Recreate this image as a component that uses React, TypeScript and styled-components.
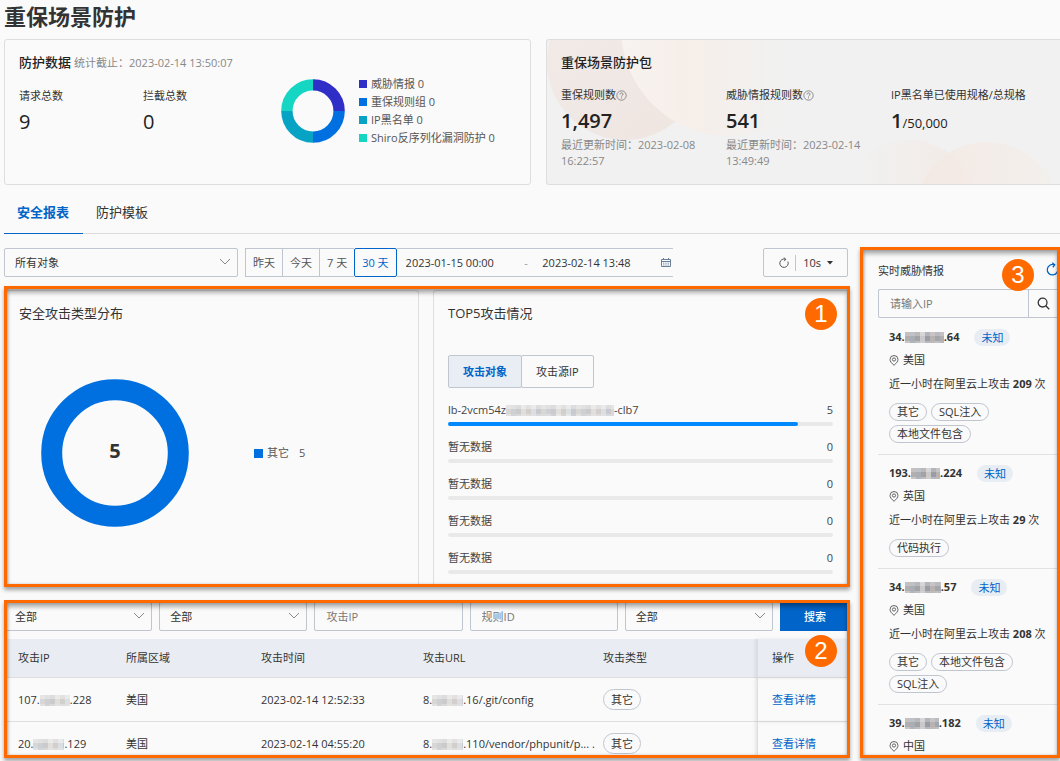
import React from "react";
import styled, { createGlobalStyle, css } from "styled-components";

const GlobalStyle = createGlobalStyle`
  *, *::before, *::after { box-sizing: border-box; }
  body {
    margin: 0;
    background: #fafafa;
    color: #333;
    font-family: "Open Sans", "Noto Sans CJK SC", sans-serif;
    font-size: 11px;
    line-height: 18px;
  }
  button, input, select { font: inherit; color: inherit; margin: 0; border-radius: 0; }
  h1, h2, p, ul, dl, dd { margin: 0; padding: 0; }
  ul { list-style: none; }
`;

const ACCENT = "#ff6a00";
const BLUE = "#0064c8";
const LINE = "#c0c6d0";

const Page = styled.div`
  display: flex;
  flex-direction: column;
  height: 100vh;
  min-height: 700px;
  padding: 0 0 3px 4px;
  overflow: hidden;
`;

const PageTitle = styled.h1`
  padding-bottom: 7px;
  font-size: 22px;
  line-height: 32px;
  font-weight: 700;
`;

/* ---------- summary cards ---------- */

const Summary = styled.section`
  display: grid;
  grid-template-columns: 527fr 514fr;
  gap: 15px;
  flex: none;
`;

const Card = styled.div<{ $tinted?: boolean }>`
  position: relative;
  display: flex;
  min-height: 146px;
  padding: 12px 14px;
  border: 1px solid #dedede;
  border-radius: 3px;
  ${(p) =>
    p.$tinted &&
    css`
      flex-direction: column;
      background: #f1f1f1;
      border-right: 0;
      border-radius: 3px 0 0 3px;
      overflow: hidden;
    `}
`;

const CardTitle = styled.h2`
  position: relative;
  margin-bottom: 14px;
  font-size: 13px;
  line-height: 20px;
  font-weight: 500;
  color: #222;
  small { font-size: 11px; color: #888; font-weight: 400; margin-left: 3px; }
`;

const Decoration = styled.svg`
  position: absolute;
  inset: 0;
  width: 100%;
  height: 100%;
`;

const Stats = styled.dl<{ $col: number; $count: number }>`
  position: relative;
  display: grid;
  grid-template-columns: repeat(${(p) => p.$count}, ${(p) => p.$col}px);
  dt { display: flex; align-items: center; }
`;

const StatValue = styled.dd<{ $strong?: boolean }>`
  font-size: 20px;
  line-height: 33px;
  font-weight: ${(p) => (p.$strong ? 600 : 500)};
  color: #222;
  span { font-size: 13px; font-weight: 400; }
`;

const StatNote = styled.dd`
  width: 140px;
  line-height: 16px;
  color: #888;
`;

const DataBlock = styled.div`
  width: 262px;
`;

const Legend = styled.ul`
  margin-left: 14px;
  align-self: center;
  color: #555;
  li { display: flex; align-items: center; gap: 4px; }
`;

const Swatch = styled.i<{ $color: string; $size: number }>`
  width: ${(p) => p.$size}px;
  height: ${(p) => p.$size}px;
  background: ${(p) => p.$color};
`;

const ChartRow = styled.div`
  display: flex;
  align-items: center;
  height: 117px;
`;

/* ---------- tabs and toolbar ---------- */

const Tabs = styled.nav`
  display: flex;
  flex: none;
  height: 49px;
  border-bottom: 1px solid #dcdcdc;
`;

const Tab = styled.button<{ $active?: boolean }>`
  height: 49px;
  padding: 6px 14px 0 13px;
  border: 0;
  border-bottom: 1px solid ${(p) => (p.$active ? BLUE : "transparent")};
  background: none;
  font-size: 13px;
  font-weight: ${(p) => (p.$active ? 700 : 400)};
  color: ${(p) => (p.$active ? BLUE : "#333")};
`;

const Body = styled.div`
  display: grid;
  grid-template-columns: minmax(0, 1fr) 200px;
  gap: 10px;
  flex: 1;
  min-height: 0;
  padding-top: 13px;
`;

const Main = styled.main`
  display: flex;
  flex-direction: column;
  min-width: 0;
  min-height: 0;
`;

const Toolbar = styled.div`
  display: flex;
  gap: 7px;
  flex: none;
  padding: 1px 2px 9px 0;
`;

const SelectWrap = styled.div<{ $width?: number }>`
  position: relative;
  flex: ${(p) => (p.$width ? `0 0 ${p.$width}px` : "1")};
  min-width: 0;
  select {
    width: 100%;
    height: 29px;
    padding: 0 24px 0 10px;
    border: 1px solid ${LINE};
    border-radius: 2px;
    background: transparent;
    appearance: none;
  }
  svg { position: absolute; right: 7px; top: 10px; pointer-events: none; }
`;

const Range = styled.div`
  display: flex;
  flex: 0 0 428px;
  height: 29px;
`;

const RangeButton = styled.button<{ $active?: boolean }>`
  flex: none;
  padding: 0 7px;
  border: 1px solid ${(p) => (p.$active ? BLUE : LINE)};
  border-right-width: ${(p) => (p.$active ? 1 : 0)}px;
  border-radius: ${(p) => (p.$active ? 2 : 0)}px;
  background: transparent;
  color: ${(p) => (p.$active ? BLUE : "#555")};
`;

const Dates = styled.div`
  display: flex;
  align-items: center;
  flex: 1;
  min-width: 0;
  padding: 0 2px 0 9px;
  border: solid ${LINE};
  border-width: 1px 0;
  color: #999;
  input {
    flex: 1;
    width: 100px;
    min-width: 0;
    height: 20px;
    padding: 0;
    border: 0;
    background: none;
    color: #333;
  }
  span { width: 18px; }
`;

const Refresh = styled.div`
  display: flex;
  align-items: center;
  height: 29px;
  margin-left: auto;
  padding: 0 14px;
  border: 1px solid ${LINE};
  border-radius: 2px;
`;

const PlainButton = styled.button`
  display: flex;
  align-items: center;
  gap: 6px;
  padding: 0;
  border: 0;
  background: none;
`;

const Divider = styled.i`
  width: 1px;
  height: 16px;
  margin: 0 7px 0 5px;
  background: ${LINE};
`;

/* ---------- numbered call-out frames ---------- */

const Frame = styled.section<{ $grow?: boolean }>`
  position: relative;
  display: flex;
  flex-direction: column;
  flex: ${(p) => (p.$grow ? "1" : "none")};
  min-height: 0;
  & + & { margin-top: 13px; }
  &::after {
    content: "";
    position: absolute;
    inset: 0;
    border: 3px solid ${ACCENT};
    box-shadow: 0 3px 4px rgba(0, 0, 0, 0.35), inset 0 4px 4px rgba(0, 0, 0, 0.3),
      inset 1px 0 3px rgba(0, 0, 0, 0.2);
    pointer-events: none;
  }
`;

const Clip = styled.div`
  flex: 1;
  min-height: 0;
  overflow: hidden;
`;

const Marker = styled.b<{ $top: number; $right: number }>`
  position: absolute;
  z-index: 1;
  top: ${(p) => p.$top}px;
  right: ${(p) => p.$right}px;
  width: 32px;
  height: 32px;
  border-radius: 50%;
  background: ${ACCENT};
  color: #fff;
  font: 400 24px/32px "Liberation Sans", sans-serif;
  text-align: center;
`;

/* ---------- charts ---------- */

const Charts = styled.div`
  display: grid;
  grid-template-columns: 415fr 417fr;
  gap: 14px;
  padding-top: 4px;
`;

const Panel = styled.div`
  min-height: 297px;
  padding: 12px 16px 0 14px;
  border: 1px solid #dedede;
  border-bottom: 0;
  border-radius: 3px 3px 0 0;
`;

const PanelTitle = styled.h2`
  font-size: 13px;
  line-height: 20px;
  font-weight: 400;
`;

const PieRow = styled.div`
  display: flex;
  align-items: center;
  margin-top: 56px;
  padding-left: 22px;
`;

const PieLegend = styled.div`
  display: flex;
  align-items: center;
  gap: 4px;
  margin-left: 65px;
  color: #555;
  span { margin-left: 6px; }
`;

const Segments = styled.div`
  display: flex;
  margin: 32px 0 13px;
`;

const Segment = styled.button<{ $active?: boolean }>`
  height: 33px;
  padding: 0 14px;
  border: 1px solid ${LINE};
  border-radius: 2px;
  background: ${(p) => (p.$active ? "#e9edf4" : "transparent")};
  color: ${(p) => (p.$active ? BLUE : "#333")};
  font-weight: ${(p) => (p.$active ? 700 : 400)};
  & + & { margin-left: -1px; }
`;

const TopItem = styled.li`
  margin-bottom: 12px;
  div { display: flex; justify-content: space-between; padding-bottom: 3px; color: #444; }
`;

const Bar = styled.p<{ $value: number }>`
  height: 4px;
  border-radius: 2px;
  background: #e9e9e9;
  &::before {
    content: "";
    display: block;
    width: ${(p) => p.$value}%;
    height: 4px;
    border-radius: 2px;
    background: #0088ff;
  }
`;

/* ---------- attack table ---------- */

const Filters = styled.form`
  display: grid;
  grid-template-columns: repeat(5, minmax(0, 1fr)) 70px;
  gap: 7px;
  padding: 2px 0 8px;
`;

const Field = styled.input`
  min-width: 0;
  height: 29px;
  padding: 0 11px;
  border: 1px solid ${LINE};
  border-radius: 2px;
  background: transparent;
  &::placeholder { color: #777; opacity: 1; }
`;

const Submit = styled.button`
  height: 29px;
  padding: 0;
  border: 0;
  background: ${BLUE};
  color: #fff;
  font-weight: 500;
`;

const Table = styled.table`
  width: 100%;
  table-layout: fixed;
  border-collapse: separate;
  border-spacing: 0;
  th, td {
    padding: 0 0 0 14px;
    border-bottom: 1px solid #dedede;
    text-align: left;
    font-weight: 400;
    white-space: nowrap;
  }
  th { height: 39px; background: #e9edf3; }
  td { height: 44px; }
  th:last-child, td:last-child {
    border-left: 1px solid #dedede;
    box-shadow: -2px 0 3px rgba(0, 0, 0, 0.08);
  }
  a { color: ${BLUE}; text-decoration: none; }
`;

const Tag = styled.span<{ $large?: boolean }>`
  display: inline-block;
  height: ${(p) => (p.$large ? 21 : 18)}px;
  padding: 0 7px;
  border: 1px solid ${LINE};
  border-radius: 11px;
  line-height: ${(p) => (p.$large ? 19 : 16)}px;
`;

/* ---------- threat feed ---------- */

const Feed = styled.div`
  padding: 15px 0 0 18px;
`;

const FeedHead = styled.div`
  display: flex;
  align-items: flex-start;
  justify-content: space-between;
  height: 27px;
`;

const Search = styled.form`
  display: flex;
  height: 29px;
  margin-bottom: 1px;
  border: 1px solid ${LINE};
  border-right: 0;
  border-radius: 2px 0 0 2px;
  input {
    flex: 1;
    min-width: 0;
    padding: 0 11px;
    border: 0;
    background: none;
    &::placeholder { color: #777; opacity: 1; }
  }
  button {
    display: flex;
    align-items: center;
    width: 32px;
    padding: 0 0 0 8px;
    border: 0;
    border-left: 1px solid ${LINE};
    background: none;
  }
`;

const Threat = styled.li`
  display: flex;
  flex-direction: column;
  padding: 9px 0 11px 11px;
  border-bottom: 1px solid #e2e2e2;
`;

const Address = styled.div`
  display: flex;
  align-items: center;
  height: 18px;
  gap: 15px;
  font-weight: 700;
`;

const Badge = styled.span`
  padding: 0 7px;
  border-radius: 9px;
  background: #e8edf4;
  color: ${BLUE};
  font-weight: 400;
  line-height: 17px;
`;

const Place = styled.div`
  display: flex;
  align-items: center;
  gap: 4px;
  margin: 5px 0 6px;
`;

const Tags = styled.div`
  display: flex;
  flex-wrap: wrap;
  gap: 4px;
  margin-top: 10px;
  padding-right: 40px;
`;

/* ---------- drawings ---------- */

const tones = ["#d8d7d6", "#cdd0d4", "#cccaca", "#e0dfdd", "#d3cfcd", "#dcdfe2", "#c9cacf"];
const darks = ["#b4aeae", "#a9adb4", "#a5a2a6", "#c9c9cb", "#9a9da6", "#b8b2b0", "#a2a6ad"];

const MaskSvg = styled.svg`
  vertical-align: -2px;
  flex: none;
`;

function Mask({ width, dark }: { width: number; dark?: boolean }) {
  const set = dark ? darks : tones;
  const cells = [];
  for (let x = 0; x < width; x += 5) {
    const tone = set[(x / 5) % set.length];
    cells.push(
      <g key={x} fill={tone}>
        <rect x={x} y={0} width={5} height={4} opacity={dark ? 0.75 : 0.6} />
        <rect x={x} y={4} width={5} height={5} />
        <rect x={x} y={9} width={5} height={2} opacity={x % 2 ? 0.9 : 0.7} />
      </g>
    );
  }
  return <MaskSvg width={width} height={11} aria-hidden="true">{cells}</MaskSvg>;
}

const Chevron = () => (
  <svg width="12" height="8" viewBox="0 0 12 8" fill="none" stroke="#888">
    <path d="M1 1l5 5 5-5" />
  </svg>
);

const Help = () => (
  <svg width="11" height="11" viewBox="0 0 11 11" fill="none" stroke="#777">
    <circle cx="5.5" cy="5.5" r="4.7" strokeWidth="0.8" />
    <path d="M4 4.4c0-2 3-2 3 0 0 1-1.5 1-1.5 2.1M5.5 7.4v1" strokeWidth="0.9" />
  </svg>
);

const Reload = ({ size, color }: { size: number; color: string }) => (
  <svg width={size} height={size} viewBox="0 0 12 12" fill="none" stroke={color} strokeWidth="1">
    <path d="M9.9 4.6A4.2 4.2 0 1 1 7.6 2.3M5.8 0.6L7.8 2.3 6.2 4.2" />
  </svg>
);

const Calendar = () => (
  <svg width="10" height="9" viewBox="0 0 10 9" fill="none" stroke="#6b7f96" strokeWidth="1">
    <path d="M.5 1.5h9v7h-9zM.5 3.5h9M2.5 0v1.5M7.5 0v1.5" />
    <path d="M2 5.2h6M2 7h6" strokeDasharray="1.4 0.9" strokeWidth="0.8" />
  </svg>
);

const Pin = () => (
  <svg width="10" height="11" viewBox="0 0 10 11" fill="none" stroke="#555" strokeWidth="0.9">
    <path d="M5 10.3C2.4 8 1 6.3 1 4.5a4 4 0 0 1 8 0C9 6.3 7.6 8 5 10.3z" />
    <circle cx="5" cy="4.5" r="1.6" />
  </svg>
);

const Magnifier = () => (
  <svg width="13" height="13" viewBox="0 0 13 13" fill="none" stroke="#333" strokeWidth="1.3">
    <circle cx="5.6" cy="5.6" r="4.4" />
    <path d="M8.8 8.8l3.4 3.4" />
  </svg>
);

const Caret = () => (
  <svg width="6" height="4" viewBox="0 0 6 4"><path d="M0 0h6L3 3.6z" fill="#333" /></svg>
);

const legend = [
  { name: "威胁情报", color: "#2f2fc8" },
  { name: "重保规则组", color: "#0070e0" },
  { name: "IP黑名单", color: "#06a3c4" },
  { name: "Shiro反序列化漏洞防护", color: "#14d6c2" },
];

const Quarters = () => (
  <svg width="64" height="64" viewBox="0 0 64 64" fill="none" strokeWidth="11.4">
    {legend.map((l, i) => (
      <path key={l.name} d="M32 5.9A26.1 26.1 0 0 1 58.1 32" stroke={l.color}
        transform={`rotate(${i * 90} 32 32)`} />
    ))}
  </svg>
);

const Backdrop = () => (
  <Decoration aria-hidden="true">
    <defs>
      <linearGradient id="a" x1="0" y1="0" x2="1" y2="1">
        <stop offset="0" stopColor="#f1ebe8" /><stop offset="1" stopColor="#efe5e1" />
      </linearGradient>
      <linearGradient id="b" x1="0" y1="0" x2="1" y2="0">
        <stop offset="0" stopColor="#f8f3f0" /><stop offset="0.3" stopColor="#f6eee9" />
        <stop offset="0.75" stopColor="#f1f1f1" />
      </linearGradient>
      <linearGradient id="c" x1="0" y1="0" x2="1" y2="0">
        <stop offset="0.1" stopColor="#f1f1f1" /><stop offset="1" stopColor="#f3eae5" />
      </linearGradient>
      <linearGradient id="d" x1="0" y1="0" x2="1" y2="0">
        <stop offset="0" stopColor="#f4e8e2" /><stop offset="1" stopColor="#f3efeb" />
      </linearGradient>
    </defs>
    <circle cx="78" cy="22" r="78" fill="url(#a)" />
    <circle cx="182" cy="-12" r="108" fill="url(#b)" />
    <circle cx="362" cy="168" r="68" fill="url(#c)" />
    <circle cx="440" cy="174" r="72" fill="url(#d)" opacity="0.85" />
  </Decoration>
);

const Select = ({ label, value, width }: { label: string; value: string; width?: number }) => (
  <SelectWrap $width={width}>
    <select aria-label={label}><option>{value}</option></select>
    <Chevron />
  </SelectWrap>
);

/* ---------- data ---------- */

const top5 = [
  { name: <>lb-2vcm54z<Mask width={108} />-clb7</>, count: 5, value: 91 },
  ...Array.from({ length: 4 }, () => ({ name: <>暂无数据</>, count: 0, value: 0 })),
];

const attacks = [
  { ip: ["107.", 30, ".228"], time: "2023-02-14 12:52:33", url: ".16/.git/config" },
  { ip: ["20.", 31, ".129"], time: "2023-02-14 04:55:20", url: ".110/vendor/phpunit/p... ." },
] as const;

const threats = [
  { ip: ["34.", 39, ".64"], place: "美国", count: 209, tags: ["其它", "SQL注入", "本地文件包含"] },
  { ip: ["193.", 29, ".224"], place: "英国", count: 29, tags: ["代码执行"] },
  { ip: ["34.", 36, ".57"], place: "美国", count: 208, tags: ["其它", "本地文件包含", "SQL注入"] },
  { ip: ["39.", 34, ".182"], place: "中国", count: 0, tags: [] },
] as const;

export default function App() {
  return (
    <Page>
      <GlobalStyle />
      <PageTitle>重保场景防护</PageTitle>

      <Summary>
        <Card>
          <DataBlock>
            <CardTitle>防护数据<small>统计截止：2023-02-14 13:50:07</small></CardTitle>
            <Stats $col={124} $count={2}>
              <div><dt>请求总数</dt><StatValue>9</StatValue></div>
              <div><dt>拦截总数</dt><StatValue>0</StatValue></div>
            </Stats>
          </DataBlock>
          <ChartRow>
            <Quarters />
            <Legend>
              {legend.map((l) => (
                <li key={l.name}><Swatch $color={l.color} $size={8} />{l.name} 0</li>
              ))}
            </Legend>
          </ChartRow>
        </Card>
        <Card $tinted>
          <Backdrop />
          <CardTitle>重保场景防护包</CardTitle>
          <Stats $col={165} $count={3}>
            <div>
              <dt>重保规则数<Help /></dt>
              <StatValue $strong>1,497</StatValue>
              <StatNote>最近更新时间：2023-02-08 16:22:57</StatNote>
            </div>
            <div>
              <dt>威胁情报规则数<Help /></dt>
              <StatValue $strong>541</StatValue>
              <StatNote>最近更新时间：2023-02-14 13:49:49</StatNote>
            </div>
            <div>
              <dt>IP黑名单已使用规格/总规格</dt>
              <StatValue $strong>1<span>/50,000</span></StatValue>
            </div>
          </Stats>
        </Card>
      </Summary>

      <Tabs>
        <Tab $active>安全报表</Tab>
        <Tab>防护模板</Tab>
      </Tabs>

      <Body>
        <Main>
          <Toolbar>
            <Select label="防护对象" value="所有对象" width={234} />
            <Range>
              <RangeButton>昨天</RangeButton>
              <RangeButton>今天</RangeButton>
              <RangeButton>7 天</RangeButton>
              <RangeButton $active>30 天</RangeButton>
              <Dates>
                <input aria-label="开始时间" defaultValue="2023-01-15 00:00" />
                <span>-</span>
                <input aria-label="结束时间" defaultValue="2023-02-14 13:48" />
                <Calendar />
              </Dates>
            </Range>
            <Refresh>
              <PlainButton aria-label="刷新"><Reload size={12} color="#555" /></PlainButton>
              <Divider />
              <PlainButton>10s <Caret /></PlainButton>
            </Refresh>
          </Toolbar>

          <Frame>
            <Marker $top={12} $right={13}>1</Marker>
            <Charts>
              <Panel>
                <PanelTitle>安全攻击类型分布</PanelTitle>
                <PieRow>
                  <svg width="148" height="148" viewBox="0 0 148 148">
                    <circle cx="74" cy="74" r="63.3" fill="none" stroke="#0070e0" strokeWidth="21" />
                    <text x="74" y="79" textAnchor="middle" fontSize="20" fontWeight="700" fill="#333">5</text>
                  </svg>
                  <PieLegend><Swatch $color="#0070e0" $size={9} />其它 <span>5</span></PieLegend>
                </PieRow>
              </Panel>
              <Panel>
                <PanelTitle>TOP5攻击情况</PanelTitle>
                <Segments>
                  <Segment $active>攻击对象</Segment>
                  <Segment>攻击源IP</Segment>
                </Segments>
                <ul>
                  {top5.map((t, i) => (
                    <TopItem key={i}>
                      <div><span>{t.name}</span><span>{t.count}</span></div>
                      <Bar $value={t.value} />
                    </TopItem>
                  ))}
                </ul>
              </Panel>
            </Charts>
          </Frame>

          <Frame $grow>
            <Marker $top={35} $right={13}>2</Marker>
            <Clip>
              <Filters>
                <Select label="区域" value="全部" />
                <Select label="类型" value="全部" />
                <Field aria-label="攻击IP" placeholder="攻击IP" />
                <Field aria-label="规则ID" placeholder="规则ID" />
                <Select label="动作" value="全部" />
                <Submit type="button">搜索</Submit>
              </Filters>
              <Table>
                <colgroup>
                  {[108, 135, 162, 180, 168, 93].map((w) => <col key={w} width={w} />)}
                </colgroup>
                <thead>
                  <tr>
                    {["攻击IP", "所属区域", "攻击时间", "攻击URL", "攻击类型", "操作"].map((h) => (
                      <th key={h}>{h}</th>
                    ))}
                  </tr>
                </thead>
                <tbody>
                  {attacks.map((a) => (
                    <tr key={a.time}>
                      <td>{a.ip[0]}<Mask width={a.ip[1]} />{a.ip[2]}</td>
                      <td>美国</td>
                      <td>{a.time}</td>
                      <td>8.<Mask width={31} />{a.url}</td>
                      <td><Tag $large>其它</Tag></td>
                      <td><a href="#detail">查看详情</a></td>
                    </tr>
                  ))}
                </tbody>
              </Table>
            </Clip>
          </Frame>
        </Main>

        <Frame as="aside" $grow>
          <Marker $top={12} $right={26}>3</Marker>
          <Clip>
            <Feed>
              <FeedHead>
                实时威胁情报
                <PlainButton aria-label="刷新情报"><Reload size={15} color={BLUE} /></PlainButton>
              </FeedHead>
              <Search>
                <input aria-label="IP" placeholder="请输入IP" />
                <button type="button" aria-label="搜索IP"><Magnifier /></button>
              </Search>
              <ul>
                {threats.map((t, i) => (
                  <Threat key={i}>
                    <Address>
                      <span>{t.ip[0]}<Mask width={t.ip[1]} dark />{t.ip[2]}</span>
                      <Badge>未知</Badge>
                    </Address>
                    <Place><Pin />{t.place}</Place>
                    {t.count > 0 && <p>近一小时在阿里云上攻击 <b>{t.count}</b> 次</p>}
                    {t.tags.length > 0 && (
                      <Tags>{t.tags.map((g) => <Tag key={g}>{g}</Tag>)}</Tags>
                    )}
                  </Threat>
                ))}
              </ul>
            </Feed>
          </Clip>
        </Frame>
      </Body>
    </Page>
  );
}
